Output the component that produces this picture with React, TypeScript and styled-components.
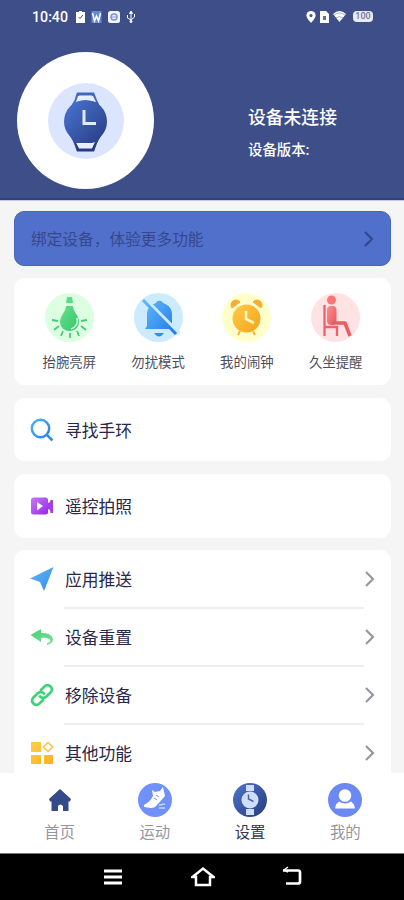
import React from 'react';
import styled, { createGlobalStyle } from 'styled-components';

const GlobalStyle = createGlobalStyle`
  * { box-sizing: border-box; }
  body { margin: 0; background: #f5f5f6; font-family: 'Noto Sans', 'Noto Sans CJK SC', sans-serif; }
  svg { display: block; flex: none; }
`;

const Screen = styled.div`
  width: 404px;
  height: 900px;
  overflow: hidden;
  display: flex;
  flex-direction: column;
  background: #f5f5f6;
`;

const Header = styled.header`
  height: 201px;
  flex: none;
  background: #3d4e89;
  border-bottom: 1px solid #c3cae2;
  box-shadow: inset 0 -2px 0 #31407f;
  color: #fff;
`;

const StatusBar = styled.div`
  height: 33px;
  padding: 0 31px 0 32px;
  display: flex;
  justify-content: space-between;
  align-items: center;
`;

const StatusGroup = styled.div<{ $gap: number }>`
  display: flex;
  align-items: center;
  gap: ${p => p.$gap}px;
`;

const Time = styled.span`
  font: 500 14.2px/20px Roboto, 'Noto Sans', sans-serif;
  width: 38px;
  white-space: nowrap;
`;

const Battery = styled.span`
  width: 20px;
  height: 11px;
  margin-left: 3px;
  border-radius: 4px;
  background: #e9ebf3;
  color: #717892;
  font: 500 9px/11px Roboto, sans-serif;
  text-align: center;
`;

const DeviceSummary = styled.div`
  padding: 19px 0 0 17px;
  display: flex;
`;

const Avatar = styled.div`
  width: 137px;
  height: 137px;
  border-radius: 50%;
  background: #fff;
  display: flex;
  align-items: center;
  justify-content: center;
`;

const DeviceText = styled.div`
  padding: 50px 0 0 94px;
  white-space: nowrap;
`;

const DeviceStatus = styled.div`
  font-size: 17.8px;
  font-weight: 500;
  line-height: 30px;
`;

const DeviceVersion = styled.div`
  font-size: 14.4px;
  font-weight: 500;
  line-height: 20px;
  margin-top: 8px;
`;

const Content = styled.main`
  flex: none;
  height: 572px;
  overflow: hidden;
  padding: 10px 13px 0 14px;
  display: flex;
  flex-direction: column;
`;

const Banner = styled.div`
  height: 55px;
  flex: none;
  border-radius: 10px;
  background: #5170cc;
  border: 1px solid #4468bd;
  padding: 0 15px 0 16px;
  display: flex;
  align-items: center;
  justify-content: space-between;
  color: #36488b;
  font-size: 15.7px;
`;

const Card = styled.section<{ $height: number; $top: number }>`
  height: ${p => p.$height}px;
  margin-top: ${p => p.$top}px;
  flex: none;
  border-radius: 11px;
  background: #fff;
`;

const QuickGrid = styled.div`
  display: grid;
  grid-template-columns: repeat(4, 88.8px);
  justify-content: center;
  padding-top: 15px;
`;

const QuickItem = styled.div`
  display: flex;
  flex-direction: column;
  align-items: center;
  gap: 10px;
  color: #4c4e5c;
  font-size: 13.4px;
  line-height: 20px;
`;

const Row = styled.div<{ $height: number }>`
  height: ${p => p.$height}px;
  padding: 0 15px 0 16px;
  display: grid;
  grid-template-columns: 24px 1fr 12px;
  column-gap: 11px;
  align-items: center;
`;

const RowLabel = styled.span`
  color: #282849;
  font-size: 16.8px;
  line-height: 24px;
  padding-top: 2px;
`;

const Divider = styled.div`
  height: 2px;
  margin: -1px 27px -1px 50px;
  background: #eeeeef;
`;

const TabBar = styled.nav`
  height: 81px;
  flex: none;
  padding: 10px 11px 0 12px;
  display: grid;
  grid-template-columns: repeat(4, 1fr);
  background: #fff;
  border-bottom: 1px solid #777;
`;

const Tab = styled.div<{ $active?: boolean }>`
  display: flex;
  flex-direction: column;
  align-items: center;
  gap: 5px;
  color: ${p => (p.$active ? '#34374a' : '#9696a0')};
  font-size: 15.4px;
  line-height: 22px;
`;

const SystemNav = styled.div`
  height: 46px;
  flex: none;
  background: #000;
  padding: 12px 101px 0 102px;
  display: flex;
  justify-content: space-between;
`;

const Chevron = ({ color = '#9698a1' }: { color?: string }) => (
  <svg width="12" height="18" viewBox="0 0 12 18" fill="none" stroke={color} strokeWidth="2.2">
    <path d="M2 2l7 7-7 7" />
  </svg>
);

const Gradient = ({ id, from, to }: { id: string; from: string; to: string }) => (
  <defs>
    <linearGradient id={id} x1="0" y1="0" x2="1" y2="1">
      <stop stopColor={from} />
      <stop offset="1" stopColor={to} />
    </linearGradient>
  </defs>
);

const WatchLogo = () => (
  <svg width="76" height="76" viewBox="0 0 76 76">
    <Gradient id="watch" from="#4976d5" to="#293b80" />
    <circle cx="38" cy="38" r="38" fill="#dbe5fe" />
    <path d="M27 21l3-10h15l4 10" fill="#eef3ff" stroke="#4167bf" strokeWidth="3" />
    <path d="M26 56l4 11h15l4-11" fill="#eef3ff" stroke="#293b80" strokeWidth="3" />
    <path d="M26 18h23l8 13v15l-8 14H26l-8-14V31z" fill="url(#watch)" />
    <path d="M28 19l2-6h15l3 6Q38 16 28 19M28 60q10 3 19-1l-3 6H31z" fill="#e6eeff" />
    <circle cx="37.500" cy="38.500" r="21.500" fill="url(#watch)" />
    <path d="M36 27v13.500H48" fill="none" stroke="#e0eaff" strokeWidth="3" />
  </svg>
);

const Bulb = () => (
  <svg width="49" height="49" viewBox="0 0 49 49">
    <Gradient id="bulb" from="#6de492" to="#38c46c" />
    <circle cx="24.5" cy="24.5" r="24.5" fill="#dcffe1" />
    <path d="M22 4h5l1 6h-7zM21 13h7c0 6 6 9 6 16 0 5-4 9-9.500 9S15 34 15 29c0-7 6-10 6-16" fill="url(#bulb)" />
    <path d="M32 25q2 8-6 11" fill="none" stroke="#dcffe1" strokeWidth="1.500" />
    <path d="M7 27l6 1M9 37l5-4M16 43l2-5M25 45v-5M34 43l-2-5M41 37l-5-4M42 27l-6 1" stroke="#42ce78" strokeWidth="1.800" />
  </svg>
);

const BellOff = () => (
  <svg width="49" height="49" viewBox="0 0 49 49">
    <Gradient id="bell" from="#60b8fa" to="#2278e8" />
    <circle cx="24.500" cy="24.500" r="24.500" fill="#cdebff" />
    <path d="M11 36l2-3V21c0-6 4-9 9-11 1-3 6-3 7 0 6 2 9 6 9 12v11l2 3zM20 40h10q-5 7-10 0" fill="url(#bell)" />
    <path d="M11 7l34 34" stroke="#cdebff" strokeWidth="5" />
    <path d="M9 7l33 34" stroke="url(#bell)" strokeWidth="3" />
  </svg>
);

const Alarm = () => (
  <svg width="49" height="49" viewBox="0 0 49 49">
    <Gradient id="alarm" from="#ffcc4b" to="#f4a319" />
    <circle cx="24.500" cy="24.500" r="24.500" fill="#ffffcc" />
    <path d="M10 15a4.500 4.500 0 0 1 8-6zM31 9a4.500 4.500 0 0 1 8 6z" fill="#f6ae34" stroke="#f6ae34" strokeLinejoin="round" />
    <path d="M18 38l-2 4M31 38l2 4" stroke="#f7b42e" strokeWidth="2" />
    <circle cx="24.500" cy="25.500" r="14" fill="url(#alarm)" />
    <path d="M24 18v8l8 4" fill="none" stroke="#fff7c5" strokeWidth="2.600" />
  </svg>
);

const Seated = () => (
  <svg width="49" height="49" viewBox="0 0 49 49" fill="none">
    <Gradient id="seat" from="#fa928e" to="#ef5361" />
    <circle cx="24.500" cy="24.500" r="24.500" fill="#ffe2e4" />
    <circle cx="20.500" cy="7" r="4.500" fill="#f87676" />
    <rect x="16" y="13" width="9.500" height="19" rx="4" fill="url(#seat)" />
    <path d="M21 30h13l5 13" stroke="#ef5b63" strokeWidth="3.500" strokeLinejoin="round" />
    <path d="M13.500 12v31M13.500 34H26v9" stroke="#ee616b" strokeWidth="2.300" />
  </svg>
);

const SearchIcon = () => (
  <svg width="24" height="24" viewBox="0 0 24 24" fill="none" strokeWidth="2.500">
    <Gradient id="search" from="#45b5f7" to="#2c80ed" />
    <circle cx="10.500" cy="10.500" r="8.700" stroke="url(#search)" /><path d="M17 17l5.500 5.500" stroke="#318fea" />
  </svg>
);
const VideoIcon = () => (
  <svg width="24" height="24" viewBox="0 0 24 24">
    <Gradient id="video" from="#c779f4" to="#9527eb" />
    <rect x="1" y="3.500" width="17" height="17" rx="2.500" fill="url(#video)" />
    <path d="M18 9l2-1 .5-2H23v13h-2.500l-.5-3-2-1z" fill="#a83ced" /><path d="M7 8l6 4-6 4.500z" fill="#fff" />
  </svg>
);
const PlaneIcon = () => (
  <svg width="24" height="24" viewBox="0 0 24 24"><Gradient id="plane" from="#65b9fa" to="#338be6" /><path d="M23.500 0L0 11.500 10 15l4 9z" fill="url(#plane)" /></svg>
);
const ReplyIcon = () => (
  <svg width="24" height="24" viewBox="0 0 24 24"><Gradient id="reply" from="#49ce76" to="#72e590" /><path d="M.5 10L11 4v4c13-1 16 10 6 12v-2c6-1 4-6-6-5v4z" fill="url(#reply)" /></svg>
);
const LinkIcon = () => (
  <svg width="24" height="24" viewBox="0 0 24 24" fill="none" stroke="#3fd377" strokeWidth="2.700" strokeLinecap="round">
    <path d="M10 13.500a4.500 4.500 0 0 0 6.500 0L21 9a4.300 4.300 0 0 0-6-6l-4 4" /><path d="M14 10.500a4.500 4.500 0 0 0-6.500 0L3 15a4.300 4.300 0 0 0 6 6l4-4" />
  </svg>
);
const AppsIcon = () => (
  <svg width="24" height="24" viewBox="0 0 24 24">
    <Gradient id="apps" from="#ffcc4e" to="#ffb315" />
    <path d="M1 1h10v10H1zM1 14h10v9H1zM14 14h9v9h-9z" fill="url(#apps)" />
    <path d="M18 1.500l4.500 4.500-4.500 4.500L13.500 6z" fill="none" stroke="#ffc25a" strokeWidth="1.700" />
  </svg>
);

const HomeIcon = () => (
  <svg width="34" height="34" viewBox="0 0 34 34"><path d="M17 6l11 10-1 2.500h-1.500V28H20v-5q-3-3-5 0v5H8.500v-9.500H7L6 16z" fill="#354a8b" /></svg>
);
const ShoeIcon = () => (
  <svg width="34" height="34" viewBox="0 0 34 34">
    <circle cx="17" cy="17" r="17" fill="#7090fa" />
    <path d="M14 7l1 6q-3 6-9 9v2l7 1q4 0 6-3l8-9-2-9-3 4-5 1z" fill="#fff" /><path d="M18 12l3 2M16 15l3 2" stroke="#7090fa" />
    <path d="M21 22l6-1M21 25h6" stroke="#c7d3ff" strokeWidth="1.500" />
  </svg>
);
const WatchTabIcon = () => (
  <svg width="34" height="34" viewBox="0 0 34 34">
    <Gradient id="watch-tab" from="#4f74ce" to="#263a79" />
    <circle cx="17" cy="17" r="17" fill="url(#watch-tab)" /><path d="M13 2h8v6h-8zM13 26h8v6h-8z" fill="#cfdefc" />
    <circle cx="17" cy="17" r="8.500" fill="#cfdefc" /><path d="M15.500 11.500V16l5 2.500" fill="none" stroke="#506596" strokeWidth="1.500" />
  </svg>
);
const ProfileIcon = () => (
  <svg width="34" height="34" viewBox="0 0 34 34">
    <circle cx="17" cy="17" r="17" fill="#6c89f3" /><circle cx="17" cy="12.500" r="6.300" fill="#fff" />
    <path d="M11 18.500q6 4 12 0l3 3 1 4H7l1-4z" fill="#fff" />
  </svg>
);

const quickActions = [
  { label: '抬腕亮屏', Icon: Bulb },
  { label: '勿扰模式', Icon: BellOff },
  { label: '我的闹钟', Icon: Alarm },
  { label: '久坐提醒', Icon: Seated },
];
const settings = [
  { label: '应用推送', Icon: PlaneIcon },
  { label: '设备重置', Icon: ReplyIcon },
  { label: '移除设备', Icon: LinkIcon },
  { label: '其他功能', Icon: AppsIcon },
];
const tabs = [
  { label: '首页', Icon: HomeIcon },
  { label: '运动', Icon: ShoeIcon },
  { label: '设置', Icon: WatchTabIcon, active: true },
  { label: '我的', Icon: ProfileIcon },
];

export default function App() {
  return (
    <Screen>
      <GlobalStyle />
      <Header>
        <StatusBar>
          <StatusGroup $gap={6}>
            <Time>10:40</Time>
            <svg width="9" height="12" viewBox="0 0 9 12"><path d="M0 1h3V0h3v1h3v11H0z" fill="#fff" /><path d="M2.500 6L4 7.500 7 4" fill="none" stroke="#43558d" /></svg>
            <svg width="11" height="12" viewBox="0 0 10 12"><path d="M0 0h10v12H0z" fill="#6488d3" /><path d="M1 2l2 8 2-5 2 5 2-8" fill="none" stroke="#fff" strokeWidth="1.500" /></svg>
            <svg width="12" height="12" viewBox="0 0 12 12"><rect width="12" height="12" rx="2.500" fill="#f4f5ff" /><circle cx="6" cy="6" r="3" fill="none" stroke="#7895db" strokeWidth="1.500" /><path d="M3 6h6" stroke="#7895db" /></svg>
            <svg width="10" height="12" viewBox="0 0 10 12" fill="none" stroke="#fff"><path d="M5 1v9M1.500 4v3L5 9l3.500-3V3" /><path d="M3.500 2.500L5 0l1.500 2.500z" fill="#fff" /><circle cx="5" cy="10.500" r="1" fill="#fff" /></svg>
          </StatusGroup>
          <StatusGroup $gap={4}>
            <svg width="10" height="12" viewBox="0 0 10 13"><path d="M5 0a5 5 0 0 1 5 5c0 3-5 8-5 8S0 8 0 5a5 5 0 0 1 5-5" fill="#fff" /><circle cx="5" cy="5" r="1.700" fill="#43558d" /></svg>
            <svg width="9" height="12" viewBox="0 0 9 12"><path d="M0 0h6l3 3v9H0z" fill="#fff" /><path d="M3 5h3v4H3z" fill="#62719e" /></svg>
            <svg width="13" height="11" viewBox="0 0 13 11"><path d="M0 3q6.500-6 13 0L6.500 11z" fill="#fff" /><path d="M1 4q5.500-4 11 0M3 7q3.500-3 7 0" fill="none" stroke="#7f8bb2" strokeWidth=".7" /></svg>
            <Battery>100</Battery>
          </StatusGroup>
        </StatusBar>
        <DeviceSummary>
          <Avatar><WatchLogo /></Avatar>
          <DeviceText>
            <DeviceStatus>设备未连接</DeviceStatus>
            <DeviceVersion>设备版本:</DeviceVersion>
          </DeviceText>
        </DeviceSummary>
      </Header>
      <Content>
        <Banner>绑定设备，体验更多功能<Chevron color="#34498c" /></Banner>
        <Card $height={107} $top={12}>
          <QuickGrid>
            {quickActions.map(({ label, Icon }) => <QuickItem key={label}><Icon />{label}</QuickItem>)}
          </QuickGrid>
        </Card>
        <Card $height={63} $top={13}><Row $height={64}><SearchIcon /><RowLabel>寻找手环</RowLabel></Row></Card>
        <Card $height={64} $top={13}><Row $height={64}><VideoIcon /><RowLabel>遥控拍照</RowLabel></Row></Card>
        <Card $height={240} $top={12}>
          {settings.map(({ label, Icon }, i) => (
            <React.Fragment key={label}>
              {i > 0 && <Divider />}
              <Row $height={58}><Icon /><RowLabel>{label}</RowLabel><Chevron /></Row>
            </React.Fragment>
          ))}
        </Card>
      </Content>
      <TabBar>
        {tabs.map(({ label, Icon, active }) => <Tab key={label} $active={active}><Icon />{label}</Tab>)}
      </TabBar>
      <SystemNav>
        <svg width="22" height="22" viewBox="0 0 22 22" stroke="#fff" strokeWidth="3"><path d="M2 5h18M2 11h18M2 17h18" /></svg>
        <svg width="24" height="22" viewBox="0 0 24 22" fill="none" stroke="#fff" strokeWidth="2.500"><path d="M1.500 11L12 2.500 22.500 11H19v8H5v-8z" /></svg>
        <svg width="22" height="22" viewBox="0 0 22 22" fill="none" stroke="#fff" strokeWidth="2.700"><path d="M2 4.500h15q2 0 2 2v9q0 2-2 2H5" /><path d="M7 1L3 4l4 2" strokeWidth="1.500" /></svg>
      </SystemNav>
    </Screen>
  );
}
